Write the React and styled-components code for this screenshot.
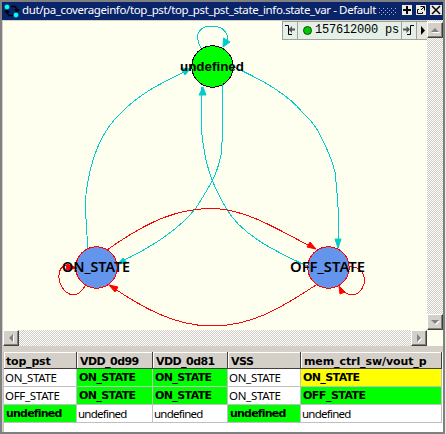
import React from 'react';
import styled, { createGlobalStyle } from 'styled-components';

const Global = createGlobalStyle`
  * { box-sizing: border-box; }
  body { margin: 0; background: #ece9e2; overflow: hidden; }
`;

const Window = styled.div`
  width: 445px;
  height: 434px;
  display: flex;
  flex-direction: column;
  background: #d4d0c8;
  border: 2px solid #808080;
  font-family: "Noto Sans", "DejaVu Sans", sans-serif;
  color: #000;
`;

const TitleBar = styled.header`
  height: 18px;
  flex: none;
  display: flex;
  align-items: center;
  padding-left: 2px;
  background: #0a246a;
  color: #fff;
`;

const TitleIcon = styled.svg`
  width: 16px;
  height: 14px;
  flex: none;
`;

const TitleText = styled.span`
  width: 357px;
  flex: none;
  margin-left: 2px;
  font-size: 11.5px;
  line-height: 16px;
  padding-bottom: 2px;
  white-space: pre;
  letter-spacing: -0.385px;
`;

const Grip = styled.svg`
  width: 18px;
  height: 9px;
  flex: none;
  margin-right: 5px;
`;

const TitleButton = styled.button`
  width: ${(p) => (p.$wide ? 12 : 10)}px;
  height: 10px;
  flex: none;
  padding: 0;
  margin: 0 4px 2px 0;
  border: 0;
  background: #ece9e2;
  svg { display: block; width: 100%; height: 10px; }
`;

const Viewport = styled.main`
  height: 326px;
  flex: none;
  display: grid;
  grid-template-columns: 424px 16px;
  grid-template-rows: 310px 16px;
  margin-left: 1px;
  background: #fffff0;
`;

const Canvas = styled.section`
  position: relative;
  border-top: 1px solid #d4d0c8;
`;

const Graph = styled.svg`
  display: block;
  width: 424px;
  height: 309px;
`;

const StateLabel = styled.text`
  font-family: ${(p) => (p.$plain ? '"Liberation Sans", Arial' : '"Noto Sans", "DejaVu Sans"')}, sans-serif;
  font-size: ${(p) => (p.$plain ? 13 : 13.5)}px;
  font-weight: ${(p) => (p.$plain ? 700 : 600)};
`;

const TimeBar = styled.div`
  position: absolute;
  z-index: 1;
  left: 279px;
  top: 0;
  width: 145px;
  height: 19px;
  display: flex;
  border: 1px solid #a0a0a0;
  border-right: 0;
  background: #e4efe6;
`;

const TimeStep = styled.button`
  width: 14px;
  flex: none;
  padding: 0;
  border: 0;
  background: transparent;
  svg { display: block; width: 14px; height: 17px; }
`;

const TimeMore = styled(TimeStep)`
  width: 11px;
  border-left: 1px solid #a0a0a0;
  background: #e6e6de;
  svg { width: 10px; }
`;

const TimeValue = styled.div`
  width: 105px;
  flex: none;
  display: flex;
  align-items: center;
  padding-left: 5px;
  border: solid #a0a0a0;
  border-width: 0 1px;
  font: 12px/19px "Liberation Mono", "Courier New", monospace;
  letter-spacing: -0.2px;
  white-space: pre;
`;

const Dot = styled.i`
  width: 9px;
  height: 9px;
  margin-right: 3px;
  flex: none;
  border: 1px solid #065006;
  border-radius: 50%;
  background: #00c800;
`;

const Scrollbar = styled.div`
  display: flex;
  flex-direction: ${(p) => (p.$vertical ? 'column' : 'row')};
  justify-content: space-between;
  padding-top: ${(p) => (p.$vertical ? 2 : 0)}px;
  background: repeating-conic-gradient(#fff 0 25%, #d0ccc4 0 50%) 0 0 / 2px 2px;
`;

const ScrollButton = styled.button`
  width: 16px;
  height: 16px;
  padding: 0;
  border: 1px solid;
  border-color: #fff #404040 #404040 #fff;
  box-shadow: inset -1px -1px #808080;
  background: #d4d0c8;
  svg { display: block; width: 14px; height: 14px; }
`;

const Table = styled.div`
  display: grid;
  grid-template-columns: 73px 76px 75px 73px 141px;
  grid-template-rows: 17px 18px 18px 18px;
  height: 80px;
  margin: 6px 0 0 1px;
  background: #fff;
  border-left: 1px solid #c0c0c0;
`;

const HeadCell = styled.div`
  padding-left: ${(p) => p.$pad}px;
  border-right: 1px solid #404040;
  border-bottom: 1px solid #404040;
  box-shadow: inset 1px 1px #fff;
  background: #d4d0c8;
  font: bold 11px/19px "DejaVu Sans", sans-serif;
  letter-spacing: ${(p) => p.$track}px;
  white-space: nowrap;
`;

const fills = { green: '#00ff00', yellow: '#ffff00', none: '#ffffff' };

const Cell = styled.div`
  padding-left: ${(p) => (p.$fill === 'none' ? 1 : 2)}px;
  border-right: 1px solid #c0c0c0;
  border-bottom: 1px solid #c0c0c0;
  background: ${(p) => fills[p.$fill]};
  font-family: ${(p) => (p.$fill === 'none' ? '"Noto Sans", sans-serif' : '"DejaVu Sans", sans-serif')};
  font-size: ${(p) => (p.$fill === 'none' ? 11.5 : 11)}px;
  line-height: ${(p) => (p.$fill === 'none' ? 17 : 18)}px;
  font-weight: ${(p) => (p.$fill === 'none' ? 400 : 700)};
  letter-spacing: ${(p) => p.$track}px;
  white-space: nowrap;
`;

const headers = [
  ['top_pst', 2, -0.2], ['VDD_0d99', 3, -0.55], ['VDD_0d81', 3, -0.55],
  ['VSS', 3, -0.5], ['mem_ctrl_sw/vout_p', 3, -0.1],
];

const rows = [
  [['ON_STATE', 'none'], ['ON_STATE', 'green'], ['ON_STATE', 'green'], ['ON_STATE', 'none'], ['ON_STATE', 'yellow']],
  [['OFF_STATE', 'none'], ['ON_STATE', 'green'], ['ON_STATE', 'green'], ['ON_STATE', 'none'], ['OFF_STATE', 'green']],
  [['undefined', 'green'], ['undefined', 'none'], ['undefined', 'none'], ['undefined', 'green'], ['undefined', 'none']],
];

const tracking = {
  'ON_STATE none': -0.3, 'OFF_STATE none': -0.3, 'undefined none': -0.75,
  'ON_STATE green': -0.6, 'ON_STATE yellow': -0.6, 'OFF_STATE green': -0.5,
  'undefined green': -0.8,
};

const triangles = {
  up: 'M7 5 L11 9 H3 Z', down: 'M3 5 H11 L7 9 Z',
  left: 'M5 7 L9 3 V11 Z', right: 'M5 3 L9 7 L5 11 Z',
};

function Arrow({ dir }) {
  return (
    <ScrollButton aria-label={dir}>
      <svg viewBox="0 0 14 14">
        <path d={triangles[dir]} fill="#fff" transform="translate(1 1)" />
        <path d={triangles[dir]} fill="#808080" />
      </svg>
    </ScrollButton>
  );
}

const CYAN = '#00cccc';
const RED = '#ff0000';

const edges = [
  [CYAN, 'M201 48 C193 34 200 26 212 26 C225 26 232 37 224 46', 'M223 47 L223.500 38 L230 42 Z'],
  [CYAN, 'M88 248 C86 225 85 200 86.500 190 C91 158 100 136 115 119 C136 96 153 87 190 69', 'M190 69 L181 68 L185 75 Z'],
  [CYAN, 'M234 67 C262 80 288 94 303 113 Q312 121 318 131 Q331 155 335 172 C338 200 339 215 338.500 248', 'M338 248 L335 239 L341 239 Z'],
  [CYAN, 'M222 84 C223 112 223 136 221 155 C217 175 211 184 196 208 C180 228 155 246 118 263', 'M118 264 L123 258 L127 263 Z'],
  [CYAN, 'M307 266 C270 249 240 233 226 208 C211 183 205 163 202 135 Q201 112 202 87', 'M203 87 L199 95 L206 95 Z'],
  [RED, 'M107 250 C152 218 181 208.500 212 208.500 C244 208.500 276 228 315 249', 'M316 249 L307 247 L310 242 Z'],
  [RED, 'M316 285 C278 310 250 326 212 326 C173 326 140 306 109 285', 'M109 285 L118 287 L115 292 Z'],
  [RED, 'M85 286 C78 297 72 297 65 291 C57 283 56 267 67 265 L76 268', 'M77 268 L67 264 L66 270 Z'],
  [RED, 'M350 267 C361 266 366 276 364 284 C360 297 347 299 339 286', 'M339 286 L340 294 L345 292 Z'],
];

const states = [
  { name: 'undefined', x: 212.5, y: 66.5, fill: '#00ff00', stroke: '#000', tx: 180, ty: 71, w: 64 },
  { name: 'ON_STATE', x: 96.5, y: 267.5, fill: '#6495ed', stroke: RED, tx: 62, ty: 272, w: 68 },
  { name: 'OFF_STATE', x: 328.5, y: 267.5, fill: '#6495ed', stroke: RED, tx: 290, ty: 272, w: 75 },
];

export default function App() {
  return (
    <>
      <Global />
      <Window>
        <TitleBar>
          <TitleIcon viewBox="0 0 16 14">
            <path d="M7 2.500 H11 L13 5 V7 M11 5.500 L13 7.500 L15 5.500 M9 11.500 H5 L3 9 V6 M1 8.500 L3 6 L5 8.500" fill="none" stroke="#000" strokeWidth="1.300" />
            <circle cx="3" cy="3" r="2.700" fill="#00ffff" stroke="#000" strokeWidth=".4" />
            <circle cx="12" cy="11" r="2.700" fill="#00ffff" stroke="#000" strokeWidth=".4" />
          </TitleIcon>
          <TitleText>dut/pa_coverageinfo/top_pst/top_pst_pst_state_info.state_var - Default</TitleText>
          <Grip viewBox="0 0 18 9">
            {[0, 1, 2, 3].map((r) => [0, 1, 2, 3, 4].map((c) => (
              <rect key={`${r}${c}`} x={c * 4 + (r % 2) * 2} y={r * 2 + 1} width="1" height="1" fill="#a8b4d0" />
            )))}
          </Grip>
          <TitleButton aria-label="Add">
            <svg viewBox="0 0 10 10"><path d="M5 1 V9 M1 5 H9" stroke="#000" strokeWidth="2" /></svg>
          </TitleButton>
          <TitleButton aria-label="Undock">
            <svg viewBox="0 0 10 10"><path d="M4.500 1.500 H8.500 V5.500 M8 2 L5 5 M3 4.500 H1.500 V8.500 H6.500 V7" fill="none" stroke="#000" /></svg>
          </TitleButton>
          <TitleButton $wide aria-label="Close">
            <svg viewBox="0 0 12 10"><path d="M2 1 L10 9 M10 1 L2 9" stroke="#000" strokeWidth="1.500" /></svg>
          </TitleButton>
        </TitleBar>
        <Viewport>
          <Canvas>
            <Graph viewBox="3 21 424 309">
              {states.map((s) => (
                <circle key={s.name} cx={s.x} cy={s.y} r="20.700" fill={s.fill} stroke={s.stroke} shapeRendering="crispEdges" />
              ))}
              {edges.map(([color, line, head]) => (
                <g key={line} stroke={color}>
                  <path d={line} fill="none" shapeRendering="crispEdges" />
                  <path d={head} fill={color} />
                </g>
              ))}
              {states.map((s) => (
                <StateLabel key={s.name} $plain={s.name === 'undefined'} x={s.tx} y={s.ty} textLength={s.w} lengthAdjust="spacingAndGlyphs">{s.name}</StateLabel>
              ))}
            </Graph>
            <TimeBar>
              <TimeStep aria-label="Previous event">
                <svg viewBox="0 0 14 17"><path d="M2 3.500 H5.500 V12.500 H9" fill="none" stroke="#000" /><path d="M5.500 7.500 L9 4 V6.500 H12 V8.500 H9 V11 Z" fill="#555" /></svg>
              </TimeStep>
              <TimeValue><Dot />157612000 ps</TimeValue>
              <TimeStep aria-label="Next event">
                <svg viewBox="0 0 14 17"><path d="M5 12.500 H8.500 V3.500 H12" fill="none" stroke="#000" /><path d="M8 7.500 L4.500 4 V6.500 H1 V8.500 H4.500 V11 Z" fill="#555" /></svg>
              </TimeStep>
              <TimeMore aria-label="More">
                <svg viewBox="0 0 10 17"><path d="M4 4 L8 8.500 L4 13 Z" /></svg>
              </TimeMore>
            </TimeBar>
          </Canvas>
          <Scrollbar $vertical><Arrow dir="up" /><Arrow dir="down" /></Scrollbar>
          <Scrollbar><Arrow dir="left" /><Arrow dir="right" /></Scrollbar>
        </Viewport>
        <Table>
          {headers.map(([label, pad, track]) => (
            <HeadCell key={label} $pad={pad} $track={track}>{label}</HeadCell>
          ))}
          {rows.map((row, r) => row.map(([label, fill], c) => (
            <Cell key={`${r}-${c}`} $fill={fill} $track={tracking[`${label} ${fill}`]}>{label}</Cell>
          )))}
        </Table>
      </Window>
    </>
  );
}
